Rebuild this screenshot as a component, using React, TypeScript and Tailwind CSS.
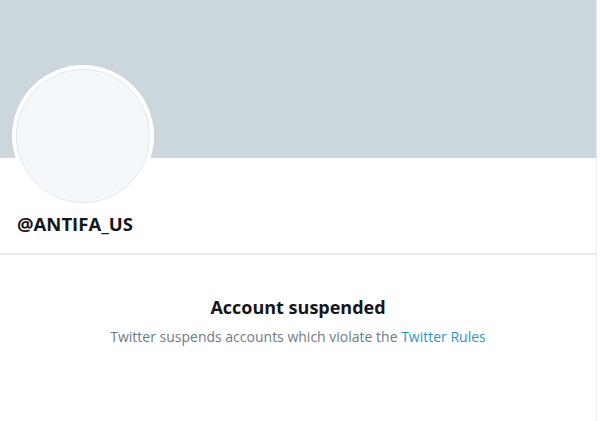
export default function App() {
  return (
    <div className="h-[421px] w-[600px] overflow-hidden bg-white font-['Open_Sans','Noto_Sans',sans-serif]">
      <div className="h-full w-[597px] border-r border-[#e6ecf0]">
        <div className="relative h-[158px] bg-[#ccd6dd]">
          <div className="absolute left-[12px] top-[65px] h-[142px] w-[142px] rounded-full bg-white p-[4px]">
            <div className="h-full w-full rounded-full border border-[#e1e8ed] bg-[#f5f8fa]" />
          </div>
        </div>
        <div className="h-[97px] border-b-2 border-[#e6ecf0] px-[17px] pt-[54px]">
          <div className="text-[18.5px] leading-[24px] font-bold text-[#14171a]">@ANTIFA_US</div>
        </div>
        <div className="flex flex-col items-center pt-[39px]">
          <div className="text-[18px] leading-[26px] font-bold text-[#14171a]">Account suspended</div>
          <div className="mt-[7px] text-[14px] leading-[20px] text-[#6e7b87]">
            Twitter suspends accounts which violate the{" "}
            <span className="text-[#2b95cf]">Twitter Rules</span>
          </div>
        </div>
      </div>
    </div>
  );
}
